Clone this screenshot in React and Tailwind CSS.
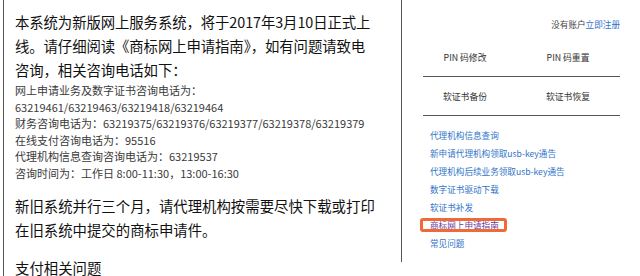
import React from "react";

const cjk = { fontFamily: '"Noto Sans CJK SC", "Noto Sans", sans-serif' };

export default function App() {
  const links = [
    "代理机构信息查询",
    "新申请代理机构领取usb-key通告",
    "代理机构后续业务领取usb-key通告",
    "数字证书驱动下载",
    "软证书补发",
  ];
  return (
    <div className="w-[640px] h-[276px] overflow-hidden bg-white flex pl-[3px]" style={cjk}>
      <div className="w-[398px] h-[276px] border-l border-[#555] pl-[11px] pt-[10px] text-[#111] shrink-0">
        <div className="text-[14.4px] leading-[24px] tracking-[-0.1px]">
          <div>本系统为新版网上服务系统，将于2017年3月10日正式上</div>
          <div>线。请仔细阅读《商标网上申请指南》，如有问题请致电</div>
          <div>咨询，相关咨询电话如下：</div>
        </div>
        <div className="text-[11px] leading-[16.6px] text-[#3a3a3a]">
          <div>网上申请业务及数字证书咨询电话为：</div>
          <div>63219461/63219463/63219418/63219464</div>
          <div>财务咨询电话为：63219375/63219376/63219377/63219378/63219379</div>
          <div>在线支付咨询电话为：95516</div>
          <div>代理机构信息查询咨询电话为：63219537</div>
          <div>咨询时间为：工作日 8:00-11:30，13:00-16:30</div>
        </div>
        <div className="mt-[12px] text-[14.4px] leading-[24px]">
          <div>新旧系统并行三个月，请代理机构按需要尽快下载或打印</div>
          <div>在旧系统中提交的商标申请件。</div>
        </div>
        <div className="mt-[14px] text-[14.4px] leading-[24px]">支付相关问题</div>
      </div>
      <div className="w-[239px] h-[262px] border-l border-[#555] pl-[21px] pr-[20px] shrink-0">
        <div className="pt-[17px] text-right text-[8.6px] leading-[14px] text-[#444]">
          没有账户<span className="text-[#2f74c8]">立即注册</span>
        </div>
        <div className="mt-[7px] border-b border-[#555] h-[39px] flex items-center text-[8.8px] text-[#333]">
          <div className="w-[84px] text-center pt-[1px]">PIN 码修改</div>
          <div className="ml-[9px] w-[104px] text-center pt-[1px]">PIN 码重置</div>
        </div>
        <div className="border-b border-[#555] h-[39px] flex items-center text-[8.8px] text-[#333]">
          <div className="w-[84px] text-center pt-[1px]">软证书备份</div>
          <div className="ml-[9px] w-[104px] text-center pt-[1px]">软证书恢复</div>
        </div>
        <div className="mt-[10px] pl-[7px] text-[8.6px] leading-[18px] text-[#2f74c8]">
          {links.map((l) => (
            <div key={l}>{l}</div>
          ))}
          <div>
            <span className="relative text-[#6b3a9c]">
              商标网上申请指南
              <span className="absolute top-[-1px] bottom-[-1px] left-[-10px] right-[-8px] border-[3px] border-[#f06a38] rounded-[3px]"></span>
            </span>
          </div>
          <div>常见问题</div>
        </div>
      </div>
    </div>
  );
}
